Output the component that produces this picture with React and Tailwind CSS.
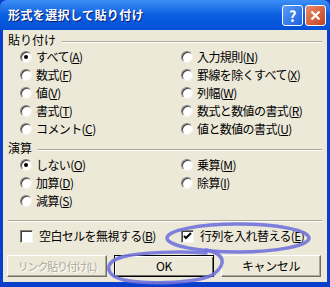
import React from "react";

const font = { fontFamily: '"Noto Sans CJK JP", "Noto Sans", sans-serif' };

function Radio({ checked, children }) {
  return (
    <div className="flex items-center h-[18px]">
      <span className="relative w-[12px] h-[12px] rounded-full bg-white border border-t-[#808080] border-l-[#808080] border-r-[#f4f3ee] border-b-[#f4f3ee] shadow-[inset_1px_1px_0_#404040] flex items-center justify-center">
        {checked && <span className="w-[4px] h-[4px] rounded-full bg-black" />}
      </span>
      <span className="ml-[4px] text-[12px] leading-none tracking-[-0.6px] text-black whitespace-nowrap">{children}</span>
    </div>
  );
}

function Check({ checked, children }) {
  return (
    <div className="flex items-center h-[16px]">
      <span className="w-[13px] h-[13px] bg-white border border-t-[#808080] border-l-[#808080] border-r-[#f4f3ee] border-b-[#f4f3ee] shadow-[inset_1px_1px_0_#404040] flex items-center justify-center">
        {checked && (
          <svg width="9" height="9" viewBox="0 0 9 9">
            <path d="M1 4 L3 6 L8 1" stroke="#000" strokeWidth="2" fill="none" />
          </svg>
        )}
      </span>
      <span className="ml-[6px] text-[12px] leading-none tracking-[-0.6px] text-black whitespace-nowrap">{children}</span>
    </div>
  );
}

function GroupHeader({ label }) {
  return (
    <div className="flex items-center h-[14px] pl-[5px] pr-[5px]">
      <span className="text-[12px] leading-none text-black">{label}</span>
      <div className="flex-1 ml-[6px] mt-[4px] border-t border-t-[#aca899] border-b border-b-white" />
    </div>
  );
}

function Btn({ children, def, disabled }) {
  return (
    <div
      className={
        "w-[100px] h-[22px] flex items-center justify-center leading-none whitespace-nowrap bg-[#ece9d8] " +
        (def
          ? "border border-black shadow-[inset_1px_1px_0_#fff,inset_-1px_-1px_0_#716f64]"
          : "border border-t-white border-l-white border-r-[#716f64] border-b-[#716f64] shadow-[inset_-1px_-1px_0_#aca899]")
      }
    >
      <span
        className={
          disabled
            ? "text-[11px] text-[#aca899] tracking-[-1.2px] [text-shadow:1px_1px_0_#fff]"
            : "text-[12px] text-black tracking-[-0.4px]"
        }
      >
        {children}
      </span>
    </div>
  );
}

export default function App() {
  return (
    <div className="relative w-[330px] h-[287px] bg-[#0a3fcb] flex flex-col overflow-hidden" style={font}>
      {/* title bar */}
      <div className="h-[30px] flex items-center pl-[8px] pr-[4px] rounded-t-[7px] bg-gradient-to-b from-[#3c8ef5] via-[#0a5ee0] to-[#0450d8]">
        <span className="flex-1 text-white font-bold text-[12px] tracking-[0.4px] [text-shadow:1px_1px_0_#0a1e70]">
          形式を選択して貼り付け
        </span>
        <div className="w-[21px] h-[21px] rounded-[3px] border border-white bg-gradient-to-br from-[#5a9cf8] to-[#1d5fe0] flex items-center justify-center text-white font-bold text-[15px] leading-none">
          ?
        </div>
        <div className="ml-[2px] w-[21px] h-[21px] rounded-[3px] border border-white bg-gradient-to-br from-[#e88a6a] to-[#c4401c] flex items-center justify-center">
          <svg width="11" height="11" viewBox="0 0 11 11">
            <path d="M1.5 1.5 L9.5 9.5 M9.5 1.5 L1.5 9.5" stroke="#fff" strokeWidth="2.2" />
          </svg>
        </div>
      </div>

      {/* body */}
      <div className="mx-[3px] mb-[5px] flex-1 bg-[#ece9d8] flex flex-col">
        <div className="mt-[3px]">
          <GroupHeader label="貼り付け" />
        </div>
        <div className="mt-[1px] grid grid-cols-[161px_1fr] pl-[17px]">
          <div className="flex flex-col">
            <Radio checked>すべて(<u>A</u>)</Radio>
            <Radio>数式(<u>F</u>)</Radio>
            <Radio>値(<u>V</u>)</Radio>
            <Radio>書式(<u>T</u>)</Radio>
            <Radio>コメント(<u>C</u>)</Radio>
          </div>
          <div className="flex flex-col">
            <Radio>入力規則(<u>N</u>)</Radio>
            <Radio>罫線を除くすべて(<u>X</u>)</Radio>
            <Radio>列幅(<u>W</u>)</Radio>
            <Radio>数式と数値の書式(<u>R</u>)</Radio>
            <Radio>値と数値の書式(<u>U</u>)</Radio>
          </div>
        </div>

        <div className="mt-[3px]">
          <GroupHeader label="演算" />
        </div>
        <div className="mt-[1px] grid grid-cols-[161px_1fr] pl-[17px]">
          <div className="flex flex-col">
            <Radio checked>しない(<u>O</u>)</Radio>
            <Radio>加算(<u>D</u>)</Radio>
            <Radio>減算(<u>S</u>)</Radio>
          </div>
          <div className="flex flex-col">
            <Radio>乗算(<u>M</u>)</Radio>
            <Radio>除算(<u>I</u>)</Radio>
          </div>
        </div>

        <div className="mt-[10px] mx-[5px] border-t border-t-[#aca899] border-b border-b-white" />

        <div className="mt-[6px] grid grid-cols-[161px_1fr] pl-[17px]">
          <Check>空白セルを無視する(<u>B</u>)</Check>
          <Check checked>行列を入れ替える(<u>E</u>)</Check>
        </div>

        <div className="mt-[11px] flex gap-[7px] pl-[4px]">
          <Btn disabled>リンク貼り付け(L)</Btn>
          <Btn def>OK</Btn>
          <Btn>キャンセル</Btn>
        </div>
      </div>

      {/* hand-drawn highlight marks */}
      <svg className="absolute inset-0 pointer-events-none" width="330" height="287" viewBox="0 0 330 287">
        <g fill="none" stroke="#7272dc" strokeOpacity="0.9" strokeWidth="3.5" strokeLinecap="round">
          <ellipse cx="238" cy="238" rx="71" ry="14" />
          <path d="M206 250 C226 254 226 264 214 274 C200 283 150 285 124 280 C104 275 104 262 122 257 C140 252 180 251 206 253" />
        </g>
      </svg>
    </div>
  );
}
